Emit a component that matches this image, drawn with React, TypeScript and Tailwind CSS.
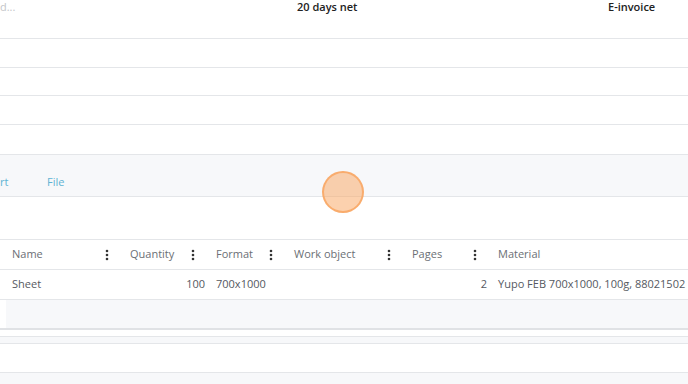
import React from 'react';

const font = { fontFamily: '"Open Sans", "Liberation Sans", sans-serif' };

function Kebab() {
  return (
    <svg width="4" height="12" viewBox="0 0 4 12" className="shrink-0">
      <circle cx="2" cy="2" r="1.3" fill="#333" />
      <circle cx="2" cy="6" r="1.3" fill="#333" />
      <circle cx="2" cy="10" r="1.3" fill="#333" />
    </svg>
  );
}

const cols = [
  { name: 'Name', w: 'w-[118px]' },
  { name: 'Quantity', w: 'w-[86px]' },
  { name: 'Format', w: 'w-[78px]' },
  { name: 'Work object', w: 'w-[118px]' },
  { name: 'Pages', w: 'w-[86px]' },
];

export default function App() {
  return (
    <div className="w-[688px] h-[384px] overflow-hidden bg-white relative text-[11px]" style={font}>
      {/* Top summary row */}
      <div className="h-[39px] flex items-start text-[11px] leading-[13px] border-b border-[#e4e6e9]">
        <div className="w-[297px] text-[#c4c6c9]">d...</div>
        <div className="w-[311px] font-semibold text-[#222]">20 days net</div>
        <div className="font-semibold text-[#222]">E-invoice</div>
      </div>
      <div className="h-[29px] border-b border-[#e4e6e9]" />
      <div className="h-[28px] border-b border-[#e4e6e9]" />
      <div className="h-[29px] border-b border-[#e4e6e9]" />

      {/* Tabs */}
      <div className="h-[29px]" />
      <div className="h-[43px] bg-[#f7f8fa] border-t border-b border-[#e4e6e9] flex items-end pb-[7px] text-[#5fb3d3]">
        <span className="w-[47px] leading-[14px]">rt</span>
        <span className="leading-[14px]">File</span>
      </div>

      <div className="h-[43px] border-b border-[#e4e6e9]" />

      {/* Table */}
      <div>
        <div className="h-[30px] flex items-center border-b border-[#e4e6e9] text-[#6b6f75] pl-[6px]">
          {cols.map((c) => (
            <div key={c.name} className={`${c.w} flex items-center justify-between pl-[6px] pr-[15px]`}>
              <span>{c.name}</span>
              <Kebab />
            </div>
          ))}
          <div className="pl-[6px]">Material</div>
        </div>
        <div className="h-[30px] flex items-center border-b border-[#e4e6e9] text-[#55595f] pl-[6px]">
          <div className="w-[118px] pl-[6px]">Sheet</div>
          <div className="w-[86px] pr-[5px] text-right">100</div>
          <div className="w-[78px] pl-[6px]">700x1000</div>
          <div className="w-[118px]" />
          <div className="w-[86px] pr-[5px] text-right">2</div>
          <div className="pl-[6px] whitespace-nowrap">Yupo FEB 700x1000, 100g, 88021502</div>
        </div>
        <div className="flex h-[30px] border-b-2 border-[#e0e2e5]">
          <div className="w-[6px]" />
          <div className="flex-1 bg-[#f7f8fa]" />
        </div>
      </div>

      <div className="h-[6px]" />
      <div className="h-[8px] bg-[#f7f8fa] border-t border-b border-[#e4e6e9]" />
      <div className="h-[29px] border-b border-[#e4e6e9]" />
      <div className="h-[20px] bg-[#f7f8fa]" />

      {/* Click indicator */}
      <div className="absolute left-[322px] top-[171px] w-[42px] h-[42px] rounded-full bg-[#f9a45e]/50 border-2 border-[#f9a45e]/80" />
    </div>
  );
}
